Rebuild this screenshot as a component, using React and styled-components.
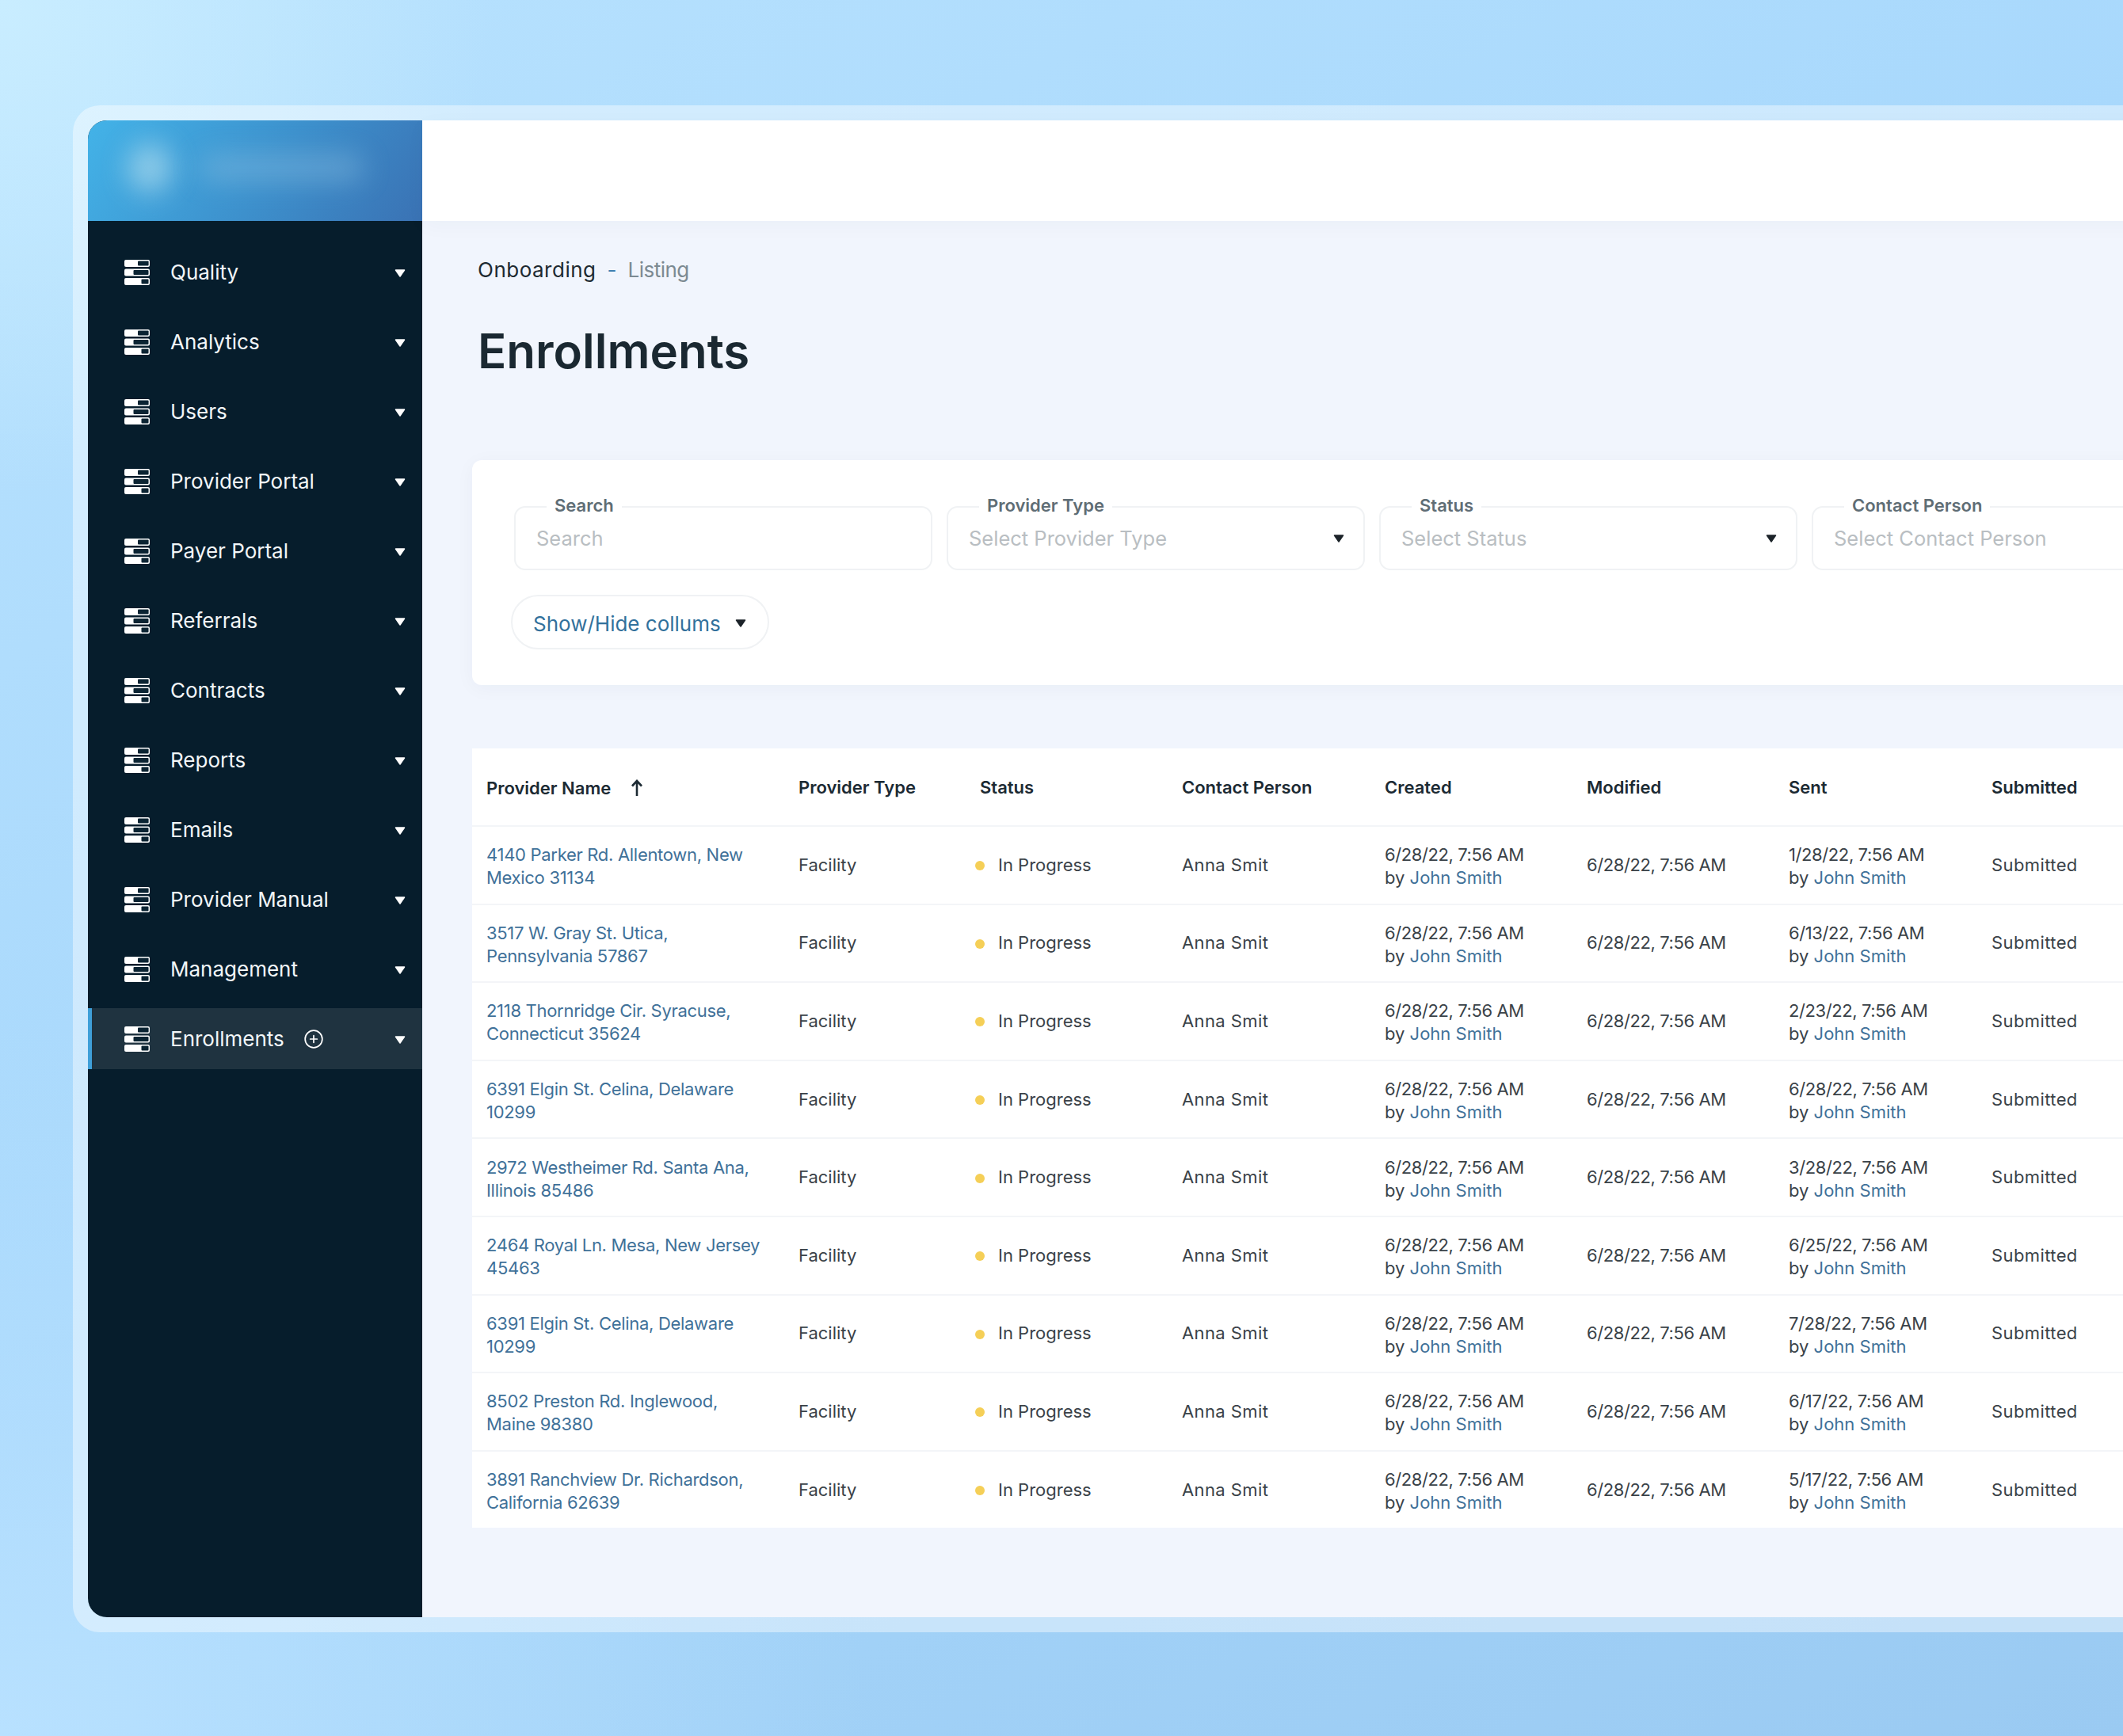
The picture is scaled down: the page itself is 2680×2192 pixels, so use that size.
import styled, { createGlobalStyle } from "styled-components"
import { CirclePlus } from "lucide-react"

const GlobalStyle = createGlobalStyle`
    html, body {
        margin: 0;
        padding: 0;
        width: 2680px;
        height: 2192px;
        overflow: hidden;
    }
    * { box-sizing: border-box; }
    body { font-family: "Inter", "Liberation Sans", sans-serif; }
`

const menu = ["Quality", "Analytics", "Users", "Provider Portal", "Payer Portal", "Referrals", "Contracts", "Reports", "Emails", "Provider Manual", "Management", "Enrollments"]

const filters = [
    { label: "Search", placeholder: "Search" },
    { label: "Provider Type", placeholder: "Select Provider Type", select: true },
    { label: "Status", placeholder: "Select Status", select: true },
    { label: "Contact Person", placeholder: "Select Contact Person" },
]

const rows = [
    { name: ["4140 Parker Rd. Allentown, New", "Mexico 31134"], sent: "1/28/22" },
    { name: ["3517 W. Gray St. Utica,", "Pennsylvania 57867"], sent: "6/13/22" },
    { name: ["2118 Thornridge Cir. Syracuse,", "Connecticut 35624"], sent: "2/23/22" },
    { name: ["6391 Elgin St. Celina, Delaware", "10299"], sent: "6/28/22" },
    { name: ["2972 Westheimer Rd. Santa Ana,", "Illinois 85486"], sent: "3/28/22" },
    { name: ["2464 Royal Ln. Mesa, New Jersey", "45463"], sent: "6/25/22" },
    { name: ["6391 Elgin St. Celina, Delaware", "10299"], sent: "7/28/22" },
    { name: ["8502 Preston Rd. Inglewood,", "Maine 98380"], sent: "6/17/22" },
    { name: ["3891 Ranchview Dr. Richardson,", "California 62639"], sent: "5/17/22" },
]

function MenuIcon() {
    return (
        <svg width="32" height="32" viewBox="0 0 32 32">
            <rect x="0" y="0" width="32" height="9" rx="2" fill="#fff" />
            <rect x="17" y="1.6" width="13.6" height="5.8" rx="1" fill="#0b2433" />
            <rect x="0" y="11.5" width="32" height="9" rx="2" fill="#fff" />
            <rect x="11.5" y="13.1" width="19" height="5.8" rx="1" fill="#0b2433" />
            <rect x="0" y="23" width="32" height="9" rx="2" fill="#fff" />
            <rect x="21.5" y="24.6" width="9" height="5.8" rx="1" fill="#0b2433" />
        </svg>
    )
}

function Caret({ color }) {
    return (
        <svg width="14" height="10" viewBox="0 0 14 10">
            <path d="M1.5 1h11L7 9z" fill={color} stroke={color} strokeWidth="1.5" strokeLinejoin="round" />
        </svg>
    )
}

function SortArrow() {
    return (
        <svg width="16" height="22" viewBox="0 0 16 22">
            <path d="M8 21V3M2 8.5L8 2l6 6.5" fill="none" stroke="#1c2a33" strokeWidth="2.6" />
        </svg>
    )
}

function Stamp({ date, withBy }) {
    return (
        <TwoLines>
            <DateText>{date}, 7:56 AM</DateText>
            {withBy && <div>by <Link>John Smith</Link></div>}
        </TwoLines>
    )
}

export default function App() {
    return (
        <Page>
            <GlobalStyle />
            <Frame>
                <Sidebar>
                    <LogoBar>
                        <LogoDot />
                        <LogoWord />
                    </LogoBar>
                    <Menu>
                        {menu.map((item, i) => (
                            <MenuRow key={item} $active={i === menu.length - 1}>
                                <MenuIcon />
                                <MenuLabel>{item}</MenuLabel>
                                {i === menu.length - 1 && <PlusIcon size={26} strokeWidth={1.6} />}
                                <MenuCaret><Caret color="#fff" /></MenuCaret>
                            </MenuRow>
                        ))}
                    </Menu>
                </Sidebar>
                <Main>
                    <TopBar />
                    <Content>
                        <Breadcrumb>
                            <Crumb>Onboarding</Crumb>
                            <Dash>-</Dash>
                            <Muted>Listing</Muted>
                        </Breadcrumb>
                        <Title>Enrollments</Title>
                        <FilterCard>
                            <Fields>
                                {filters.map((f) => (
                                    <Field key={f.label}>
                                        <FieldLabel>{f.label}</FieldLabel>
                                        <Placeholder>{f.placeholder}</Placeholder>
                                        {f.select && <Caret color="#1c2329" />}
                                    </Field>
                                ))}
                            </Fields>
                            <ColumnsButton>
                                Show/Hide collums
                                <Caret color="#1c2329" />
                            </ColumnsButton>
                        </FilterCard>
                        <Table>
                            <HeadRow>
                                <NameHead>Provider Name <SortArrow /></NameHead>
                                <Cell>Provider Type</Cell>
                                <Cell>Status</Cell>
                                <Cell>Contact Person</Cell>
                                <Cell>Created</Cell>
                                <Cell>Modified</Cell>
                                <Cell>Sent</Cell>
                                <Cell>Submitted</Cell>
                            </HeadRow>
                            {rows.map((r, i) => (
                                <Row key={i}>
                                    <Cell><TwoLines><Address>{r.name[0]}<br />{r.name[1]}</Address></TwoLines></Cell>
                                    <Cell>Facility</Cell>
                                    <StatusCell><Dot />In Progress</StatusCell>
                                    <WideCell>Anna Smit</WideCell>
                                    <Cell><Stamp date="6/28/22" withBy /></Cell>
                                    <Cell><DateText>6/28/22, 7:56 AM</DateText></Cell>
                                    <Cell><Stamp date={r.sent} withBy /></Cell>
                                    <WideCell>Submitted</WideCell>
                                </Row>
                            ))}
                        </Table>
                    </Content>
                </Main>
            </Frame>
        </Page>
    )
}

const Page = styled.div`
    width: 2680px;
    height: 2192px;
    overflow: hidden;
    padding: 133px 0 0 92px;
    background:
        radial-gradient(620px 620px at 0 0, #c9edff 0%, rgba(201, 237, 255, 0) 100%),
        radial-gradient(1100px 900px at 0 2192px, #b8e1ff 0%, rgba(184, 225, 255, 0) 100%),
        linear-gradient(150deg, #b8e2fe 0%, #a8d8fc 45%, #9acaf2 100%);
`

const Frame = styled.div`
    display: flex;
    width: 2800px;
    height: 1928px;
    padding: 19px;
    border-radius: 34px;
    background: rgba(255, 255, 255, 0.42);
`

const Sidebar = styled.aside`
    display: flex;
    flex-direction: column;
    flex: 0 0 422px;
    border-radius: 24px 0 0 24px;
    overflow: hidden;
    background: #061d2c;
`

const LogoBar = styled.div`
    display: flex;
    align-items: center;
    flex: 0 0 127px;
    gap: 36px;
    padding: 0 0 8px 50px;
    background: linear-gradient(125deg, #43b3e8 0%, #3d90cc 55%, #3a72b4 100%);
`

const LogoDot = styled.div`
    width: 56px;
    height: 62px;
    border-radius: 50%;
    background: #a8d8ec;
    opacity: 0.75;
    filter: blur(17px);
`

const LogoWord = styled.div`
    width: 205px;
    height: 30px;
    border-radius: 12px;
    background: #8bbfe0;
    opacity: 0.5;
    filter: blur(17px);
`

const Menu = styled.nav`
    display: flex;
    flex-direction: column;
    gap: 11px;
    padding-top: 26px;
`

const MenuRow = styled.div`
    display: flex;
    align-items: center;
    height: 77px;
    padding-left: ${(p) => (p.$active ? "41px" : "46px")};
    padding-right: 21px;
    color: #fff;
    background: ${(p) => (p.$active ? "#1f3340" : "transparent")};
    border-left: ${(p) => (p.$active ? "5px solid #3f9fd8" : "none")};
`

const MenuLabel = styled.span`
    margin-left: 26px;
    font-size: 26px;
    color: #f2f6f8;
`

const PlusIcon = styled(CirclePlus)`
    margin-left: 24px;
`

const MenuCaret = styled.span`
    display: flex;
    margin-left: auto;
    padding-top: 2px;
`

const Main = styled.main`
    display: flex;
    flex-direction: column;
    flex: 1;
    min-width: 0;
    background: #f1f5fd;
`

const TopBar = styled.div`
    flex: 0 0 127px;
    background: #fff;
    box-shadow: 0 6px 24px rgba(30, 50, 80, 0.03);
`

const Content = styled.div`
    padding: 44px 0 0 63px;
`

const Breadcrumb = styled.div`
    display: flex;
    align-items: center;
    height: 34px;
    padding-left: 7px;
    font-size: 26px;
    color: #1e2a32;
`

const Crumb = styled.span`
    letter-spacing: 0.5px;
`

const Dash = styled.span`
    margin: 0 14px;
    color: #3f7fb0;
`

const Muted = styled.span`
    letter-spacing: -0.5px;
    color: #7c8a92;
`

const Title = styled.h1`
    margin: 50px 0 102px;
    padding-left: 7px;
    font-size: 60px;
    line-height: 72px;
    font-weight: 600;
    color: #1a2831;
`

const FilterCard = styled.section`
    height: 284px;
    padding: 58px 0 0 53px;
    border-radius: 12px 0 0 12px;
    background: #fff;
    box-shadow: 0 4px 24px rgba(30, 50, 80, 0.04);
`

const Fields = styled.div`
    display: flex;
    gap: 18px;
`

const Field = styled.div`
    position: relative;
    display: flex;
    align-items: center;
    justify-content: space-between;
    flex: 0 0 528px;
    height: 81px;
    padding: 0 24px 0 26px;
    border: 2px solid #f0f2f4;
    border-radius: 14px;
`

const FieldLabel = styled.span`
    position: absolute;
    top: -16px;
    left: 39px;
    padding: 0 10px;
    font-size: 22px;
    line-height: 26px;
    font-weight: 600;
    color: #5f6d75;
    background: #fff;
`

const Placeholder = styled.span`
    font-size: 25.5px;
    color: #b9bec2;
`

const ColumnsButton = styled.div`
    display: inline-flex;
    align-items: center;
    gap: 18px;
    height: 69px;
    margin: 31px 0 0 -4px;
    padding: 3px 27px 0 26px;
    border: 2px solid #f0f2f4;
    border-radius: 35px;
    font-size: 26px;
    color: #32719c;
`

const Table = styled.section`
    margin-top: 80px;
    background: #fff;
    font-size: 22px;
    line-height: 29px;
    color: #3a4248;
`

const Row = styled.div`
    display: grid;
    grid-template-columns: 394px 229px 255px 256px 255px 255px 256px 1fr;
    align-items: center;
    height: 98.6px;
    border-top: 2px solid #f3f5f8;
`

const HeadRow = styled(Row)`
    height: 97px;
    padding-top: 1px;
    border-top: none;
    font-weight: 600;
    color: #1c2a33;
`

const Cell = styled.div`
    padding-left: 18px;
`

const WideCell = styled(Cell)`
    letter-spacing: 0.4px;
`

const NameHead = styled(Cell)`
    display: flex;
    align-items: center;
    gap: 25px;
    padding-top: 2px;
`

const StatusCell = styled(Cell)`
    display: flex;
    align-items: center;
    gap: 17px;
    padding-left: 12px;
`

const TwoLines = styled.div`
    padding-top: 4px;
`

const DateText = styled.span`
    letter-spacing: -0.4px;
`

const Dot = styled.span`
    width: 12px;
    height: 12px;
    margin-top: 2px;
    border-radius: 50%;
    background: #f5cf57;
`

const Link = styled.span`
    color: #3f7199;
`

const Address = styled(Link)`
    letter-spacing: -0.3px;
`
